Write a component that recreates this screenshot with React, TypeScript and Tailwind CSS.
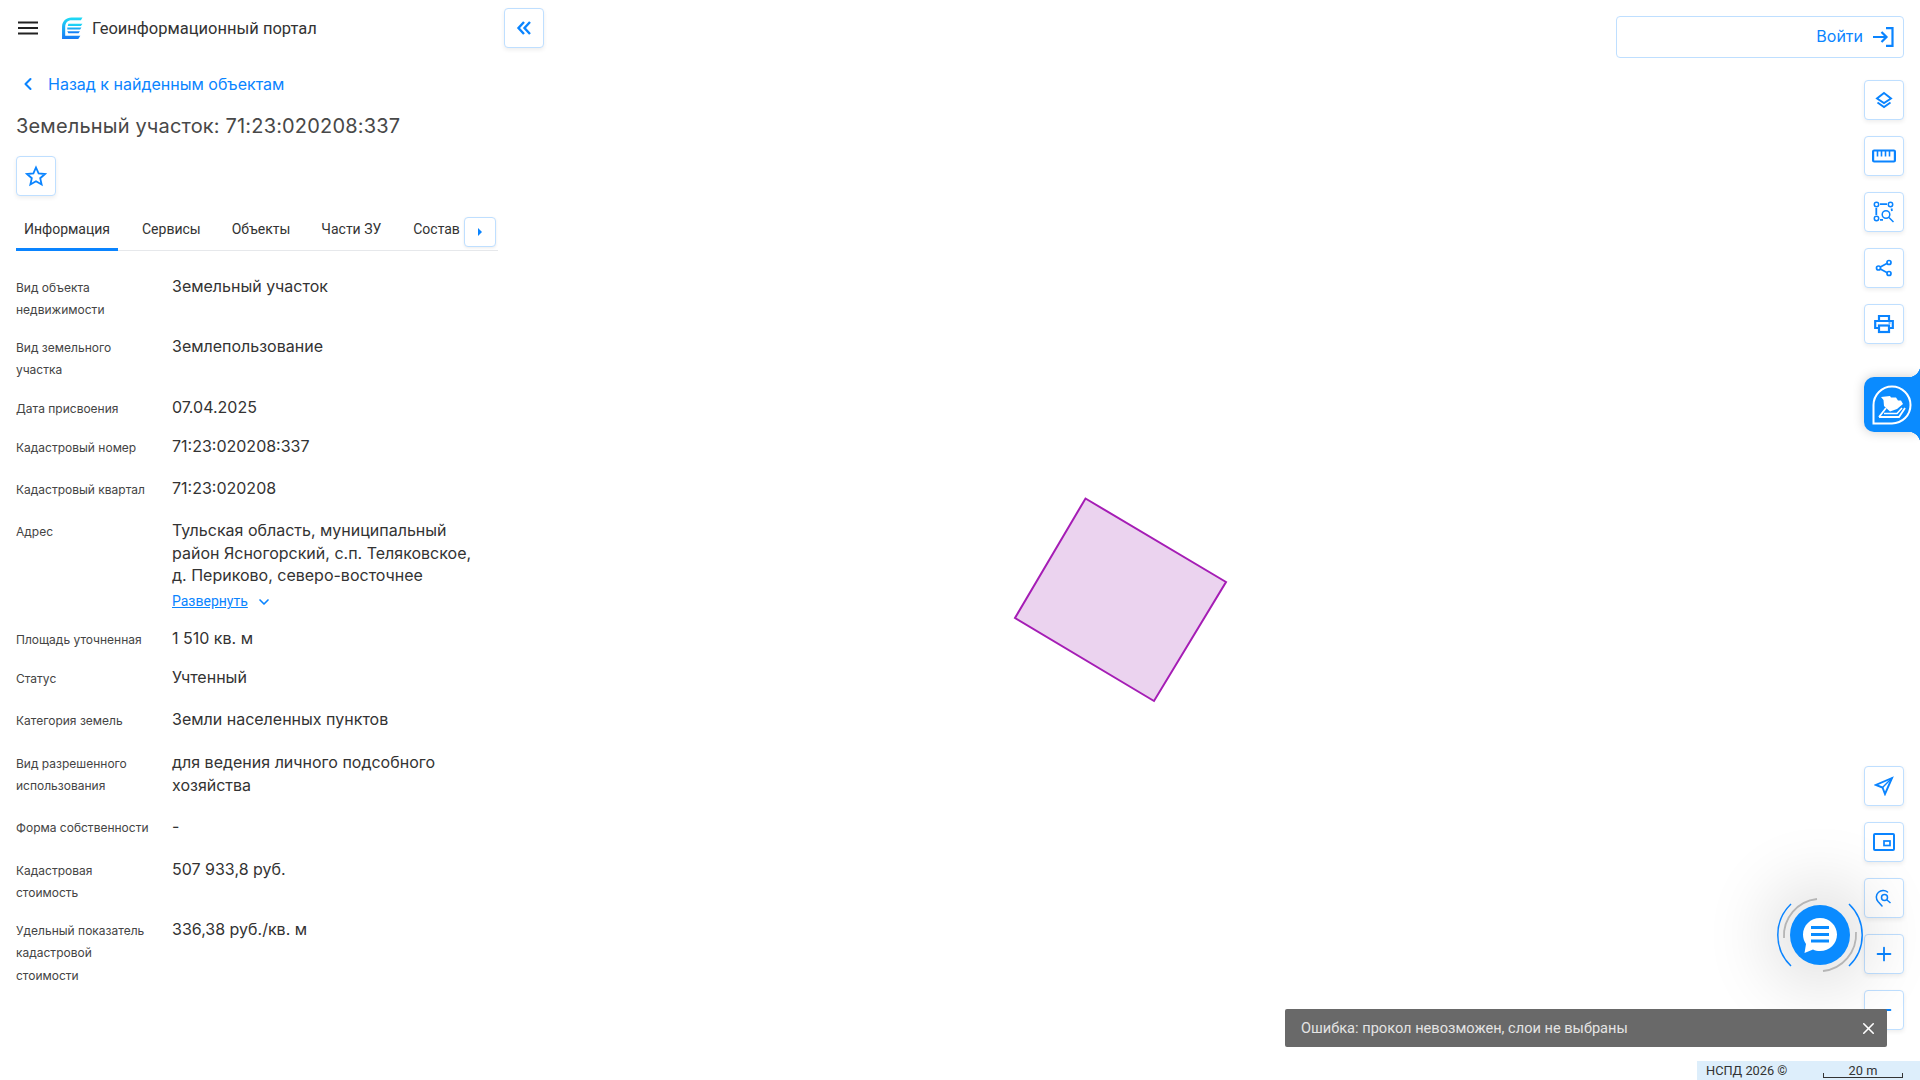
import { ChevronDown, ChevronLeft, Plus, Minus, X } from "lucide-react";
import type { ReactNode } from "react";

const BLUE = "#0a84ff";

const rows: { label: string[]; value: string[]; cls: string; more?: boolean }[] = [
  { label: ["Вид объекта", "недвижимости"], value: ["Земельный участок"], cls: "h-[60px]" },
  { label: ["Вид земельного", "участка"], value: ["Землепользование"], cls: "h-[61px]" },
  { label: ["Дата присвоения"], value: ["07.04.2025"], cls: "h-[39px]" },
  { label: ["Кадастровый номер"], value: ["71:23:020208:337"], cls: "h-[42px]" },
  { label: ["Кадастровый квартал"], value: ["71:23:020208"], cls: "h-[42px]" },
  {
    label: ["Адрес"],
    value: ["Тульская область, муниципальный", "район Ясногорский, с.п. Теляковское,", "д. Периково, северо-восточнее"],
    cls: "h-[108px]",
    more: true,
  },
  { label: ["Площадь уточненная"], value: ["1 510 кв. м"], cls: "h-[39px]" },
  { label: ["Статус"], value: ["Учтенный"], cls: "h-[42px]" },
  { label: ["Категория земель"], value: ["Земли населенных пунктов"], cls: "h-[43px]" },
  { label: ["Вид разрешенного", "использования"], value: ["для ведения личного подсобного", "хозяйства"], cls: "h-[64px]" },
  { label: ["Форма собственности"], value: ["-"], cls: "h-[43px]" },
  { label: ["Кадастровая", "стоимость"], value: ["507 933,8 руб."], cls: "h-[60px]" },
  { label: ["Удельный показатель", "кадастровой", "стоимости"], value: ["336,38 руб./кв. м"], cls: "" },
];

function IconButton({ children, className = "" }: { children: ReactNode; className?: string }) {
  return (
    <button className={`flex h-10 w-10 items-center justify-center rounded-[4px] border border-[#bfdfff] bg-white text-[#0a84ff] shadow-[0_2px_4px_rgba(0,0,0,0.07)] ${className}`}>
      {children}
    </button>
  );
}

function Logo() {
  return (
    <svg width="22" height="22" viewBox="0 0 20 21" className="shrink-0">
      <defs>
        <linearGradient id="lg" x1="0" y1="0" x2="0" y2="1">
          <stop offset="0" stopColor="#1fdcf5" />
          <stop offset="1" stopColor="#1678f5" />
        </linearGradient>
      </defs>
      <path d="M0.500 21V9.500C0.500 4 4.500 0.500 9.500 0.500H20l-1.500 2.500H9.500C6 3 3.500 5.500 3.500 9.500V18H18l-2 3Z" fill="url(#lg)" />
      <path d="M6.500 6.500 H20l-1.500 2H6ZM5.500 10H19l-1.200 2H5.500ZM5.500 13.500H17.500L16.300 15.500H6.500Z" fill="url(#lg)" />
    </svg>
  );
}

function LayersIcon() {
  return (
    <svg width="18" height="18" viewBox="0 0 18 18" fill="none" stroke={BLUE} strokeWidth="1.900">
      <path d="M9 2 16 7.500 9 12 2 7.500Z" />
      <path d="M2.500 11.500 9 16l6.500-4.500" />
    </svg>
  );
}

function RulerIcon() {
  return (
    <svg width="24" height="14" viewBox="0 0 24 14" fill="none" stroke={BLUE} strokeWidth="2.200">
      <rect x="1.100" y="1.500" width="21.800" height="11" rx="1" />
      <path d="M5.500 1.500v6M9.500 1.500v6M13.500 1.500v6M17.500 1.500v6" strokeWidth="1.600" />
    </svg>
  );
}

function AreaSearchIcon() {
  return (
    <svg width="22" height="22" viewBox="0 0 22 22" fill="none" stroke={BLUE} strokeWidth="1.500">
      <circle cx="3.500" cy="3.500" r="2.200" />
      <circle cx="17.500" cy="3.500" r="2.200" />
      <circle cx="3.500" cy="17.500" r="2.200" />
      <path d="M7 3.200h7M3.300 7v7M18.500 7.500l.5 2.500M7 18.800h3" strokeWidth="1.800" />
      <circle cx="13" cy="13.500" r="3.800" />
      <path d="m16 16.500 4.500 4.500" />
    </svg>
  );
}

function ShareIcon() {
  return (
    <svg width="18" height="18" viewBox="0 0 18 18" fill="none" stroke={BLUE} strokeWidth="1.700">
      <circle cx="14" cy="3.500" r="2" />
      <circle cx="3.500" cy="9" r="2" />
      <circle cx="14" cy="14.500" r="2" />
      <path d="m5.300 8 7-3.700M5.300 10l7 3.700" />
    </svg>
  );
}

function PrintIcon() {
  return (
    <svg width="20" height="20" viewBox="0 0 20 20" fill="none" stroke={BLUE} strokeWidth="2.200">
      <path d="M5 6V2h10v4" />
      <path d="M5 14H1.200V7h17.600v7H15" />
      <rect x="5" y="11.500" width="10" height="6.500" />
      <path d="M14.500 9h2" strokeWidth="1.200" />
    </svg>
  );
}

function NavIcon() {
  return (
    <svg width="20" height="20" viewBox="0 0 20 20" fill="none" stroke={BLUE} strokeWidth="1.900">
      <path d="M18 2 2 9l6.500 2.500L11 18Z" />
      <path d="M8.500 11.500 18 2" strokeWidth="1.500" />
    </svg>
  );
}

function MiniMapIcon() {
  return (
    <svg width="22" height="18" viewBox="0 0 22 18" fill="none" stroke={BLUE} strokeWidth="2">
      <rect x="1" y="1" width="20" height="16" rx="1" />
      <rect x="11" y="8" width="6" height="4.500" strokeWidth="1.700" />
    </svg>
  );
}

function PinSearchIcon() {
  return (
    <svg width="18" height="18" viewBox="0 0 18 18" fill="none" stroke={BLUE} strokeWidth="1.500">
      <path d="M7 17 3 12.500C.5 9.500 1 5.500 3.500 3.300 6 1.200 10 1 12.500 3" strokeLinecap="round" />
      <circle cx="9.500" cy="8.500" r="3" />
      <path d="m12 11 3.500 3" />
    </svg>
  );
}

function Chat() {
  return (
    <div className="absolute left-[1770px] top-[885px] h-[100px] w-[100px]">
      <div className="absolute left-[20px] top-[20px] flex h-[60px] w-[60px] items-center justify-center rounded-full bg-[#0a8bff] shadow-[0_0_70px_20px_rgba(0,0,0,0.14)]">
        <svg width="36" height="36" viewBox="0 0 36 36">
          <path d="M18 1c9.500 0 17 7.500 17 16.500S27.500 34 18 34c-2.500 0-5-.5-7-1.500L2.500 36 4 27C2 24 1 21 1 17.500 1 8.500 8.500 1 18 1Z" fill="#fff" />
          <path d="M9 10.500h18M9 17.500h18M9 24h18" stroke="#0a8bff" strokeWidth="3" />
        </svg>
      </div>
      <svg width="100" height="100" viewBox="0 0 100 100" fill="none" className="absolute inset-0">
        <path d="M21 19A43 43 0 0 0 21 81" stroke="#0a84ff" strokeWidth="1.500" />
        <path d="M79 19A43 43 0 0 1 79 81" stroke="#0a84ff" strokeWidth="1.500" />
        <path d="M47 14A37 37 0 0 0 14 53" stroke="#b5b5b5" strokeWidth="1.800" />
        <path d="M86 47A37 37 0 0 1 53 86" stroke="#b5b5b5" strokeWidth="1.800" />
      </svg>
    </div>
  );
}

function EntryTab() {
  return (
    <div className="relative z-10 -mr-4 flex h-[55px] w-14 items-center rounded-l-[10px] bg-[#0a8bff] pl-[8px] shadow-[0_0_12px_rgba(0,0,0,0.2)] before:absolute before:-top-3 before:right-0 before:h-3 before:w-3 before:bg-[radial-gradient(circle_at_0_0,transparent_12px,#0a8bff_12.500px)] after:absolute after:-bottom-3 after:right-0 after:h-3 after:w-3 after:bg-[radial-gradient(circle_at_0_100%,transparent_12px,#0a8bff_12.500px)]">
      <svg width="40" height="40" viewBox="0 0 40 40" fill="none">
        <path d="M1.500 38.500V20A18.500 18.500 0 1 1 20 38.500Z" stroke="#fff" strokeWidth="2" />
        <path d="M9 12l9-1 1 1.500h5l2 3h3l2 3.500-6 5-7 2.500-6-5.500-.5-6Z" fill="#fff" />
        <path d="M7 32 14 23M7 32H27l6-9" stroke="#fff" strokeWidth="1.800" />
        <path d="M12 28.500h13l5-5.500" stroke="#fff" strokeWidth="1.500" />
      </svg>
    </div>
  );
}

export default function App() {
  return (
    <div className="relative flex h-screen w-screen overflow-hidden bg-white font-['Inter',sans-serif] text-[#333]">
      <aside className="w-[560px] shrink-0">
        <header className="flex h-[56px] items-center">
          <svg width="20" height="14" viewBox="0 0 20 14" className="ml-[18px]" stroke="#222" strokeWidth="2.200">
            <path d="M0 1.500h20M0 7h20M0 12.500h20" />
          </svg>
          <div className="ml-[23px]">
            <Logo />
          </div>
          <span className="ml-[9px] mt-[2px] font-['Roboto',sans-serif] text-[16.500px] text-[#333]">Геоинформационный портал</span>
          <IconButton className="ml-auto mr-4">
            <svg width="18" height="18" viewBox="0 0 18 18" fill="none" stroke={BLUE} strokeWidth="2.400">
              <path d="M9 3 3.500 9 9 15M15 3 9.500 9 15 15" />
            </svg>
          </IconButton>
        </header>

        <div className="w-[498px] pl-4">
          <a className="mt-[13px] flex h-[30px] items-center text-[16px] text-[#0a84ff]">
            <ChevronLeft size={20} strokeWidth={2.500} className="ml-[2px]" />
            <span className="ml-[10px]">Назад к найденным объектам</span>
          </a>
          <h1 className="mt-[12px] text-[20px] leading-[30px] tracking-[0.17px] text-[#484848]">Земельный участок: 71:23:020208:337</h1>
          <IconButton className="mt-[15px]">
            <svg width="22" height="22" viewBox="0 0 22 22" fill="none" stroke={BLUE} strokeWidth="1.800">
              <path d="M11 2.500 13.600 8.400 20 9 15.200 13.200 16.600 19.500 11 16.200 5.400 19.500 6.800 13.200 2 9 8.400 8.400Z" />
            </svg>
          </IconButton>

          <div className="relative mt-[10px] flex h-[45px] border-b border-[#e6e8eb] font-['Roboto',sans-serif] text-[14px] text-[#333]">
            <div className="mb-[-1px] flex h-[45px] w-[102px] items-start justify-center border-b-[3px] border-[#0a84ff] pt-[13px]">Информация</div>
            <div className="ml-[24px] pt-[13px]">Сервисы</div>
            <div className="ml-[31px] pt-[13px]">Объекты</div>
            <div className="ml-[31px] pt-[13px]">Части ЗУ</div>
            <div className="ml-[32px] pt-[13px]">Состав</div>
            <button className="absolute right-[2px] top-[11px] flex h-[30px] w-[32px] items-center justify-center rounded-[4px] border border-[#bfdfff] bg-white shadow-[0_1px_3px_rgba(0,0,0,0.08)]">
              <svg width="6" height="10" viewBox="0 0 6 10"><path d="M1 1l4 4-4 4Z" fill="#0a84ff" /></svg>
            </button>
          </div>

          <dl className="mt-[24px]">
            {rows.map((r) => (
              <div key={r.label[0]} className={`grid grid-cols-[156px_1fr] ${r.cls}`}>
                <dt className="pt-[1.500px] text-[12px] leading-[22.500px] text-[#444]">
                  {r.label.map((l) => (
                    <div key={l}>{l}</div>
                  ))}
                </dt>
                <dd className="text-[16px] leading-[22.500px] text-[#333]">
                  {r.value.map((v) => (
                    <div key={v}>{v}</div>
                  ))}
                  {r.more && (
                    <div className="mt-[4px] flex h-[22px] items-center text-[14px] text-[#0a84ff]">
                      <span className="font-['Roboto',sans-serif] underline">Развернуть</span>
                      <ChevronDown size={16} strokeWidth={2.500} className="ml-[8px]" />
                    </div>
                  )}
                </dd>
              </div>
            ))}
          </dl>
        </div>
      </aside>

      <main className="flex flex-1 flex-col items-end justify-between pb-[50px] pr-4 pt-4">
        <div className="flex flex-col items-end">
          <button className="flex h-[42px] w-[288px] items-center justify-end rounded-[4px] border border-[#bfdfff] bg-white pr-[9px] text-[16px] text-[#0a84ff]">
            <span className="mt-[-2px]">Войти</span>
            <svg width="22" height="20" viewBox="0 0 22 20" fill="none" stroke={BLUE} strokeWidth="2.200" className="ml-[9px]">
              <path d="M14 1.200h6.500v17.600H14M1 10h13M9.500 5l5 5-5 5" />
            </svg>
          </button>
          <div className="mt-[22px] flex flex-col items-end gap-4">
            <IconButton><LayersIcon /></IconButton>
            <IconButton><RulerIcon /></IconButton>
            <IconButton><AreaSearchIcon /></IconButton>
            <IconButton><ShareIcon /></IconButton>
            <IconButton><PrintIcon /></IconButton>
            <div className="mt-[17px] w-10"><EntryTab /></div>
          </div>
        </div>
        <div className="flex flex-col gap-4">
          <IconButton><NavIcon /></IconButton>
          <IconButton><MiniMapIcon /></IconButton>
          <IconButton><PinSearchIcon /></IconButton>
          <IconButton><Plus size={22} strokeWidth={2} /></IconButton>
          <IconButton><Minus size={22} strokeWidth={2} /></IconButton>
        </div>
      </main>

      {/* участок на карте */}
      <svg className="absolute left-[1000px] top-[480px]" width="240" height="240" viewBox="0 0 240 240">
        <path d="M85.500 18.500 226 102 154 221 15 138Z" fill="#ebd3ef" stroke="#a51db5" strokeWidth="2" />
      </svg>

      <Chat />

      <div className="absolute left-[1285px] top-[1009px] flex h-[38px] w-[602px] items-center justify-between rounded-[2px] bg-[#696969] pl-[16px] pr-[9px] font-['Roboto',sans-serif] text-[14.600px] text-[#e4e4e4]">
        <span className="mt-[2px]">Ошибка: прокол невозможен, слои не выбраны</span>
        <X size={19} strokeWidth={2} className="text-white" />
      </div>

      <div className="absolute bottom-0 right-0 flex h-[19px] w-[223px] items-center bg-[#ddeefb] pl-[9px] font-['Roboto',sans-serif] text-[12.800px] text-[#333]">
        НСПД 2026 ©
        <div className="relative ml-auto mr-[17px] h-[19px] w-[80px] text-center leading-[19px]">
          20 m
          <div className="absolute bottom-[2px] left-0 h-[5px] w-full border-x border-b border-[#333]" />
        </div>
      </div>
    </div>
  );
}
